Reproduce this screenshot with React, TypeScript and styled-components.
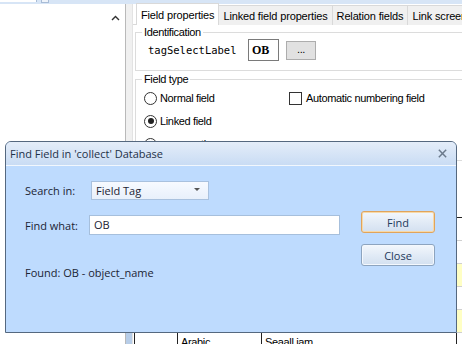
import React from 'react';
import styled, {createGlobalStyle} from 'styled-components';

const GlobalStyle = createGlobalStyle`
  html, body {
    margin: 0;
    padding: 0;
    overflow: hidden;
    background: #ffffff;
  }
  body {
    font-family: "Liberation Sans", Arial, sans-serif;
    font-size: 11px;
    letter-spacing: -0.35px;
    color: #000;
  }
`;

const tabs = ['Field properties', 'Linked field properties', 'Relation fields', 'Link screens'];

const gridRows = [
  {cells: ['', '', ''], yellow: false},
  {cells: ['', '', ''], yellow: false},
  {cells: ['', '', ''], yellow: true},
  {cells: ['', '', ''], yellow: false},
  {cells: ['', '', ''], yellow: true},
  {cells: ['', 'Arabic', 'Seaall jam'], yellow: false},
];

const App = () => {
  return (
    <Screen>
      <GlobalStyle/>
      <TopStrip>
        <StripBox/>
        <StripBtn/>
      </TopStrip>
      <Main>
        <LeftPane>
          <ScrollColumn>
            <Chevron viewBox="0 0 9 6">
              <path d="M1 5 L4.5 1.5 L8 5" fill="none" stroke="#303030" strokeWidth="1.4"/>
            </Chevron>
          </ScrollColumn>
        </LeftPane>
        <Splitter/>
        <RightPane>
          <TabBar>
            {tabs.map((t, i) => (
              <Tab key={t} active={i === 0}>{t}</Tab>
            ))}
          </TabBar>
          <TabBody>
            <Group h={39} pt={6}>
              <Legend>Identification</Legend>
              <IdRow>
                <MonoLabel>tagSelectLabel</MonoLabel>
                <TagBox>OB</TagBox>
                <DotsButton>...</DotsButton>
              </IdRow>
            </Group>
            <Group h={82} pt={7}>
              <Legend>Field type</Legend>
              <TypeGrid>
                <Option>
                  <Radio/>
                  Normal field
                </Option>
                <Option>
                  <CheckBox/>
                  Automatic numbering field
                </Option>
                <Option>
                  <Radio checked/>
                  Linked field
                </Option>
                <span/>
                <Option>
                  <Radio/>
                  enumerative
                </Option>
              </TypeGrid>
            </Group>
            <Grid>
              {gridRows.map((r, i) => (
                <GridRow key={i}>
                  <GridCell w={43}/>
                  <GridCell w={84}>{r.cells[1]}</GridCell>
                  <GridCell w={195}>{r.cells[2]}</GridCell>
                  <GridCell w={0} yellow={r.yellow}/>
                </GridRow>
              ))}
            </Grid>
          </TabBody>
        </RightPane>
      </Main>

      <Dialog>
        <TitleBar>
          <Title>Find Field in 'collect' Database</Title>
          <CloseX viewBox="0 0 12 12">
            <path d="M2 2 L10 10 M10 2 L2 10" stroke="#6b7a8c" strokeWidth="1.6"/>
          </CloseX>
        </TitleBar>
        <DialogBody>
          <FormArea>
            <FieldRow>
              <FieldLabel>Search in:</FieldLabel>
              <Select>
                Field Tag
                <SelectArrow viewBox="0 0 6 4">
                  <path d="M0 0 L6 0 L3 3 Z" fill="#555"/>
                </SelectArrow>
              </Select>
            </FieldRow>
            <FieldRow>
              <FieldLabel>Find what:</FieldLabel>
              <TextInput>OB</TextInput>
            </FieldRow>
            <FoundText>Found: OB - object_name</FoundText>
          </FormArea>
          <Buttons>
            <DlgButton primary>Find</DlgButton>
            <DlgButton>Close</DlgButton>
          </Buttons>
        </DialogBody>
      </Dialog>
    </Screen>
  );
};

const Screen = styled.div`
  position: relative;
  width: 462px;
  height: 344px;
  display: flex;
  flex-direction: column;
  overflow: hidden;
  background: #ffffff;
`;
const TopStrip = styled.div`
  height: 4px;
  display: flex;
  background: #d7e5f6;
`;
const StripBox = styled.div`
  width: 36px;
  height: 2px;
  background: #ffffff;
  border-right: 1px solid #a8bcd6;
`;
const StripBtn = styled.div`
  width: 6px;
  height: 2px;
  margin-left: 4px;
  border: 1px solid #a8bcd6;
  border-top: none;
  background: #eef3fa;
`;
const Main = styled.div`
  flex: 1;
  display: flex;
  min-height: 0;
`;
const LeftPane = styled.div`
  width: 125px;
  display: flex;
  justify-content: flex-end;
  background: #ffffff;
  border-right: 1px solid #b9b9b9;
`;
const ScrollColumn = styled.div`
  width: 19px;
  display: flex;
  justify-content: center;
  padding-top: 11px;
`;
const Chevron = styled.svg`
  width: 9px;
  height: 6px;
`;
const Splitter = styled.div`
  width: 6px;
  background: #f0f0f0;
  border-right: 1px solid #e3e3e3;
  display: flex;
  align-items: flex-end;
  &::after {
    content: '';
    width: 100%;
    height: 11px;
    background: #b7cde8;
  }
`;
const RightPane = styled.div`
  flex: 1;
  display: flex;
  flex-direction: column;
  min-width: 0;
`;
const TabBar = styled.div`
  display: flex;
  height: 20px;
  padding-left: 3px;
  white-space: nowrap;
  border-bottom: 1px solid #d9d9d9;
  background: #ffffff;
`;
const Tab = styled.div<{active?: boolean}>`
  height: ${p => (p.active ? '21px' : '19px')};
  margin-top: ${p => (p.active ? '-1px' : '1px')};
  padding: 0 4px;
  display: flex;
  align-items: center;
  flex-shrink: 0;
  letter-spacing: -0.15px;
  background: ${p => (p.active ? '#ffffff' : '#f0f0f0')};
  border: 1px solid #d9d9d9;
  border-bottom: none;
  margin-right: -1px;
  position: relative;
  z-index: ${p => (p.active ? 1 : 0)};
`;
const TabBody = styled.div`
  flex: 1;
  display: flex;
  flex-direction: column;
  padding-left: 2px;
`;
const Group = styled.div<{h: number; pt: number}>`
  box-sizing: border-box;
  height: ${p => p.h}px;
  margin-top: 8px;
  border: 1px solid #dcdcdc;
  border-right: none;
  padding: ${p => p.pt}px 0 0 8px;
  position: relative;
  &:first-child {
    margin-top: 7px;
  }
`;
const Legend = styled.span`
  position: absolute;
  top: -8px;
  left: 6px;
  padding: 0 2px;
  background: #ffffff;
  line-height: 14px;
`;
const IdRow = styled.div`
  display: flex;
  align-items: center;
`;
const MonoLabel = styled.span`
  font-family: "DejaVu Sans Mono", monospace;
  font-size: 10.5px;
  letter-spacing: 0;
  width: 100px;
  padding-left: 4px;
`;
const TagBox = styled.div`
  width: 26px;
  height: 20px;
  border: 1px solid #7a7a7a;
  display: flex;
  align-items: center;
  padding-left: 3px;
  font-family: "Liberation Serif", serif;
  font-weight: bold;
  font-size: 12px;
  letter-spacing: 0;
`;
const DotsButton = styled.div`
  width: 30px;
  height: 19px;
  box-sizing: border-box;
  margin-left: 7px;
  background: #e1e1e1;
  border: 1px solid #adadad;
  display: flex;
  align-items: center;
  justify-content: center;
  padding-bottom: 3px;
`;
const TypeGrid = styled.div`
  display: grid;
  grid-template-columns: 145px 1fr;
  row-gap: 9px;
  padding-top: 4px;
`;
const Option = styled.label`
  display: flex;
  align-items: center;
  gap: 3px;
  height: 14px;
  white-space: nowrap;
`;
const Radio = styled.span<{checked?: boolean}>`
  width: 11px;
  height: 11px;
  border-radius: 50%;
  border: 1px solid #333;
  display: inline-flex;
  align-items: center;
  justify-content: center;
  &::after {
    content: '';
    width: 6px;
    height: 6px;
    border-radius: 50%;
    background: ${p => (p.checked ? '#222' : 'transparent')};
  }
`;
const CheckBox = styled.span`
  width: 11px;
  height: 11px;
  border: 1px solid #333;
  margin-right: 1px;
`;
const Grid = styled.div`
  margin-top: 56px;
  margin-left: -1px;
  border-top: 1px solid #222;
  display: flex;
  flex-direction: column;
`;
const GridRow = styled.div`
  display: flex;
  height: 22px;
  border-bottom: 1px solid #d0d0d0;
`;
const GridCell = styled.div<{w: number; yellow?: boolean}>`
  width: ${p => (p.w ? `${p.w}px` : 'auto')};
  flex: ${p => (p.w ? 'none' : '1')};
  box-sizing: border-box;
  border-left: 1px solid #222;
  background: ${p => (p.yellow ? '#ffffc4' : '#ffffff')};
  padding: 3px 3px 0;
  overflow: hidden;
  white-space: nowrap;
`;

const Dialog = styled.div`
  position: absolute;
  left: 5px;
  top: 141px;
  width: 450px;
  height: 190px;
  border: 1px solid #55687f;
  border-radius: 6px 6px 0 0;
  background: #bedbfe;
  display: flex;
  flex-direction: column;
  overflow: hidden;
  font-family: "Open Sans", "Liberation Sans", sans-serif;
  letter-spacing: 0;
  color: #1b2434;
`;
const TitleBar = styled.div`
  height: 23px;
  display: flex;
  align-items: center;
  justify-content: space-between;
  padding: 0 8px 0 4px;
  background: linear-gradient(#e4edf9, #c9dcf4);
  border-bottom: 1px solid #f2f7fd;
`;
const Title = styled.span`
  font-size: 11px;
  color: #1e3148;
`;
const CloseX = styled.svg`
  width: 11px;
  height: 11px;
`;
const DialogBody = styled.div`
  flex: 1;
  display: flex;
  padding: 15px 21px 0 19px;
`;
const FormArea = styled.div`
  flex: 1;
  display: flex;
  flex-direction: column;
`;
const FieldRow = styled.div`
  display: flex;
  align-items: center;
  margin-bottom: 15px;
`;
const FieldLabel = styled.span`
  width: 64px;
  font-size: 11px;
`;
const Select = styled.div`
  width: 118px;
  height: 19px;
  box-sizing: border-box;
  margin-left: 2px;
  border: 1px solid #a9c1de;
  background: linear-gradient(#f7faff, #e8f0fb);
  display: flex;
  align-items: center;
  justify-content: space-between;
  padding: 0 8px 1px 4px;
  font-size: 11px;
`;
const SelectArrow = styled.svg`
  width: 6px;
  height: 4px;
`;
const TextInput = styled.div`
  width: 251px;
  height: 20px;
  box-sizing: border-box;
  border: 1px solid #a6bfdc;
  background: #ffffff;
  display: flex;
  align-items: center;
  padding: 0 0 1px 4px;
  font-size: 11px;
`;
const FoundText = styled.div`
  margin-top: 15px;
  font-size: 11px;
`;
const Buttons = styled.div`
  display: flex;
  flex-direction: column;
  gap: 11px;
  padding-top: 30px;
`;
const DlgButton = styled.div<{primary?: boolean}>`
  width: 74px;
  height: 22px;
  box-sizing: border-box;
  border: 1px solid ${p => (p.primary ? '#e0a45c' : '#8da4bf')};
  border-radius: 3px;
  background: linear-gradient(#f3f7fc, #e2ebf6 50%, #d3e0f0);
  box-shadow: ${p => (p.primary ? 'inset 0 0 0 1px #f7d9a8' : 'inset 0 0 0 1px #f4f8fd')};
  display: flex;
  align-items: center;
  justify-content: center;
  font-size: 11px;
  color: #1e395b;
`;

export default App;
